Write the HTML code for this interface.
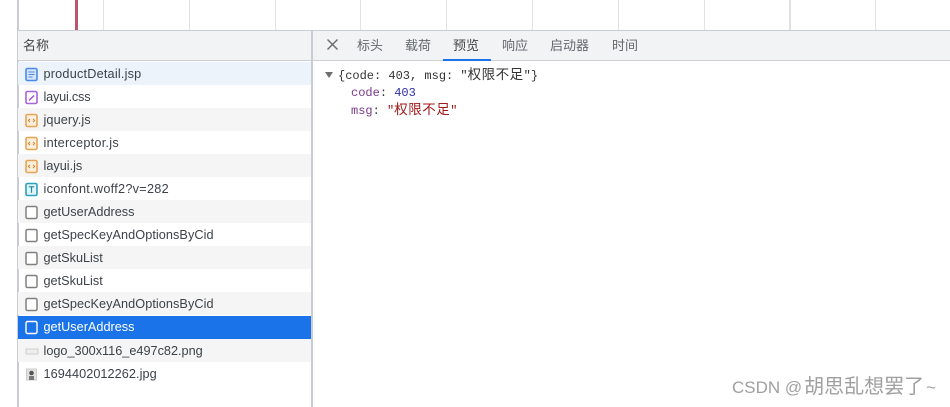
<!DOCTYPE html>
<html lang="zh"><head><meta charset="utf-8"><title>Network</title>
<style>
html,body{margin:0;padding:0;background:#fff}
body{width:950px;height:407px;position:relative;overflow:hidden;font-family:"Liberation Sans","Noto Sans CJK SC",sans-serif;font-size:12.7px;color:#303942}
.a{position:absolute}
.r{position:absolute;left:18px;width:293px;height:23px}
.r span{position:absolute;left:25.5px;top:5px;line-height:15px;white-space:nowrap;color:#3c4248}
.r svg{position:absolute;left:7px;top:5px}
.t{position:absolute;top:38px;line-height:16px;font-size:13px;color:#63686e}
.m{font-family:"Liberation Mono","Noto Sans CJK SC",monospace;font-size:12px;line-height:16px;white-space:pre;position:absolute}
.m b{font-weight:normal;font-size:13.5px;letter-spacing:.5px}
</style></head><body>
<div class="a" style="left:17px;top:0;width:1.5px;height:407px;background:#c9ccd2"></div>
<div class="a" style="left:75px;top:0;width:3px;height:30px;background:#b9566f"></div>
<div class="a" style="left:103px;top:0;width:1px;height:30px;background:#e3e3e3"></div>
<div class="a" style="left:189px;top:0;width:1px;height:30px;background:#e3e3e3"></div>
<div class="a" style="left:275px;top:0;width:1px;height:30px;background:#e3e3e3"></div>
<div class="a" style="left:360px;top:0;width:1px;height:30px;background:#e3e3e3"></div>
<div class="a" style="left:446px;top:0;width:1px;height:30px;background:#e3e3e3"></div>
<div class="a" style="left:532px;top:0;width:1px;height:30px;background:#e3e3e3"></div>
<div class="a" style="left:618px;top:0;width:1px;height:30px;background:#e3e3e3"></div>
<div class="a" style="left:704px;top:0;width:1px;height:30px;background:#e3e3e3"></div>
<div class="a" style="left:789px;top:0;width:2px;height:30px;background:#e0e0e0"></div>
<div class="a" style="left:875px;top:0;width:1px;height:30px;background:#e3e3e3"></div>

<div class="a" style="left:17px;top:30px;width:933px;height:1px;background:#c9ccd4"></div>
<div class="a" style="left:18px;top:31px;width:932px;height:29px;background:#f1f3f4"></div>
<div class="a" style="left:18px;top:60px;width:932px;height:1px;background:#cdd0d5"></div>
<div class="a" style="left:311px;top:31px;width:2px;height:376px;background:#c9ccd2"></div>
<div class="a" style="left:23px;top:38px;line-height:16px;font-size:13px;color:#444">名称</div>

<svg class="a" style="left:326px;top:38px" width="13" height="13" viewBox="0 0 13 13"><path d="M1.5 1.5L11.5 11.5M11.5 1.5L1.5 11.5" stroke="#6e6e6e" stroke-width="1.5" fill="none"/></svg>
<div class="t" style="left:357px">标头</div>
<div class="t" style="left:405px">载荷</div>
<div class="t" style="left:453px;color:#444">预览</div>
<div class="t" style="left:502px">响应</div>
<div class="t" style="left:550px">启动器</div>
<div class="t" style="left:612px">时间</div>
<div class="a" style="left:443px;top:59px;width:48px;height:2px;background:#1a73e8"></div>

<div class="a" style="left:325px;top:72px;width:0;height:0;border-left:4px solid transparent;border-right:4px solid transparent;border-top:6px solid #6e6e6e"></div>
<div class="m" style="left:338px;top:68px;color:#333">{code: 403, msg: "<b>权限不足</b>"}</div>
<div class="m" style="left:351px;top:85px"><span style="color:#7a3a8c">code</span><span style="color:#303942">: </span><span style="color:#2f2fa5">403</span></div>
<div class="m" style="left:351px;top:103px"><span style="color:#7a3a8c">msg</span><span style="color:#303942">: </span><span style="color:#a01818">"<b>权限不足</b>"</span></div>

<div class="r" style="top:62px;background:#edf3fb"><svg width="14" height="15" viewBox="0 0 14 15"><rect x="1" y="1.5" width="11" height="12" rx="1.5" fill="#d5e4fa" stroke="#4a8ae6" stroke-width="1.6"/><path d="M3.5 5h6M3.5 7.5h6M3.5 10h4" stroke="#4a8ae6"/></svg><span style="letter-spacing:.2px">productDetail.jsp</span></div>
<div class="r" style="top:85px"><svg width="14" height="15" viewBox="0 0 14 15"><rect x="1" y="1.5" width="11" height="12" rx="1.5" fill="#fff" stroke="#a864dc" stroke-width="1.6"/><path d="M4 10.5L9 5.5" stroke="#9c4fd8" stroke-width="1.4"/></svg><span style="letter-spacing:-.2px">layui.css</span></div>
<div class="r" style="top:108px;background:#f5f5f5"><svg width="14" height="15" viewBox="0 0 14 15"><rect x="1" y="1.5" width="11" height="12" rx="1.5" fill="#fcefdc" stroke="#e8a455" stroke-width="1.6"/><path d="M5 5.8L3.4 7.5 5 9.2M8 5.8L9.6 7.5 8 9.2" stroke="#c98430" fill="none"/></svg><span style="letter-spacing:.1px">jquery.js</span></div>
<div class="r" style="top:131px"><svg width="14" height="15" viewBox="0 0 14 15"><rect x="1" y="1.5" width="11" height="12" rx="1.5" fill="#fcefdc" stroke="#e8a455" stroke-width="1.6"/><path d="M5 5.8L3.4 7.5 5 9.2M8 5.8L9.6 7.5 8 9.2" stroke="#c98430" fill="none"/></svg><span style="letter-spacing:.25px">interceptor.js</span></div>
<div class="r" style="top:154px;background:#f5f5f5"><svg width="14" height="15" viewBox="0 0 14 15"><rect x="1" y="1.5" width="11" height="12" rx="1.5" fill="#fcefdc" stroke="#e8a455" stroke-width="1.6"/><path d="M5 5.8L3.4 7.5 5 9.2M8 5.8L9.6 7.5 8 9.2" stroke="#c98430" fill="none"/></svg><span>layui.js</span></div>
<div class="r" style="top:177px"><svg width="14" height="15" viewBox="0 0 14 15"><rect x="1" y="1.5" width="11" height="12" rx="1.5" fill="#e2f5f8" stroke="#2aa3bd" stroke-width="1.6"/><path d="M3.8 4.8h5.4M6.5 4.8v6" stroke="#1b8aa3" stroke-width="1.2"/></svg><span style="letter-spacing:.27px">iconfont.woff2?v=282</span></div>
<div class="r" style="top:200px;background:#f5f5f5"><svg width="14" height="15" viewBox="0 0 14 15"><rect x="1" y="1.5" width="11" height="12" rx="1.5" fill="#fff" stroke="#808080" stroke-width="1.5"/></svg><span>getUserAddress</span></div>
<div class="r" style="top:223px"><svg width="14" height="15" viewBox="0 0 14 15"><rect x="1" y="1.5" width="11" height="12" rx="1.5" fill="#fff" stroke="#808080" stroke-width="1.5"/></svg><span style="letter-spacing:.06px">getSpecKeyAndOptionsByCid</span></div>
<div class="r" style="top:246px;background:#f5f5f5"><svg width="14" height="15" viewBox="0 0 14 15"><rect x="1" y="1.5" width="11" height="12" rx="1.5" fill="#fff" stroke="#808080" stroke-width="1.5"/></svg><span>getSkuList</span></div>
<div class="r" style="top:269px"><svg width="14" height="15" viewBox="0 0 14 15"><rect x="1" y="1.5" width="11" height="12" rx="1.5" fill="#fff" stroke="#808080" stroke-width="1.5"/></svg><span>getSkuList</span></div>
<div class="r" style="top:292px;background:#f5f5f5"><svg width="14" height="15" viewBox="0 0 14 15"><rect x="1" y="1.5" width="11" height="12" rx="1.5" fill="#fff" stroke="#808080" stroke-width="1.5"/></svg><span style="letter-spacing:.06px">getSpecKeyAndOptionsByCid</span></div>
<div class="r" style="top:316px;background:#1a73e8"><svg style="top:4px" width="14" height="15" viewBox="0 0 14 15"><rect x="1" y="1.5" width="11" height="12" rx="1.5" fill="#1a73e8" stroke="#fff" stroke-width="1.4"/></svg><span style="color:#fff;top:4px">getUserAddress</span></div>
<div class="r" style="top:339px;background:#f5f5f5"><svg width="14" height="15" viewBox="0 0 14 15"><rect x="1" y="5" width="12" height="5" fill="#eee" stroke="#cfcfcf"/></svg><span>logo_300x116_e497c82.png</span></div>
<div class="r" style="top:362px"><svg width="14" height="15" viewBox="0 0 14 15"><rect x="1.5" y="2" width="10" height="11" fill="#e2e2e2" stroke="#ccc"/><circle cx="6.5" cy="6" r="2.3" fill="#555"/><rect x="4" y="9" width="5" height="4" fill="#777"/></svg><span style="letter-spacing:.06px">1694402012262.jpg</span></div>

<div class="a" style="left:732px;top:377px;line-height:20px;font-size:17px;color:#a0a0a0;white-space:nowrap">CSDN @<span style="font-size:20px;margin:0 2px">胡思乱想罢了</span>~</div>
</body></html>
